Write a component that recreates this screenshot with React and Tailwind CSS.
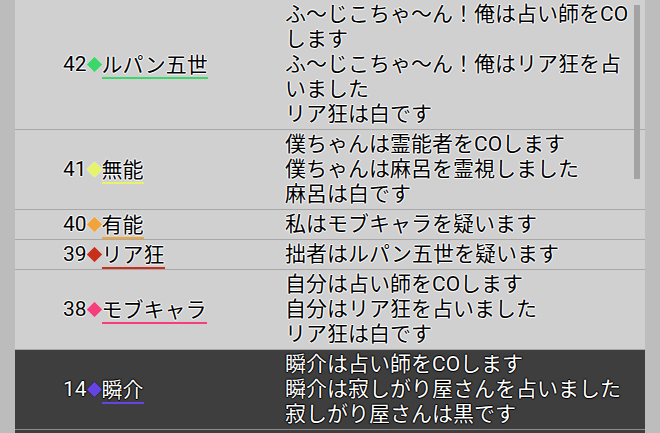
import React from 'react';

const rows = [
  {
    no: 42,
    name: 'ルパン五世',
    color: '#3dd66a',
    lines: ['ふ〜じこちゃ〜ん！俺は占い師をCO', 'します', 'ふ〜じこちゃ〜ん！俺はリア狂を占', 'いました', 'リア狂は白です'],
  },
  {
    no: 41,
    name: '無能',
    color: '#e6f46a',
    lines: ['僕ちゃんは霊能者をCOします', '僕ちゃんは麻呂を霊視しました', '麻呂は白です'],
  },
  { no: 40, name: '有能', color: '#f0a43c', lines: ['私はモブキャラを疑います'] },
  { no: 39, name: 'リア狂', color: '#c8301e', lines: ['拙者はルパン五世を疑います'] },
  {
    no: 38,
    name: 'モブキャラ',
    color: '#f43f7c',
    lines: ['自分は占い師をCOします', '自分はリア狂を占いました', 'リア狂は白です'],
  },
  {
    no: 14,
    name: '瞬介',
    color: '#6445e4',
    dark: true,
    lines: ['瞬介は占い師をCOします', '瞬介は寂しがり屋さんを占いました', '寂しがり屋さんは黒です'],
  },
];

const lightText =
  'text-black [text-shadow:1px_0_0_#fff,-1px_0_0_#fff,0_1px_0_#fff,0_-1px_0_#fff,0_0_2px_#fff]';
const darkText =
  'text-white [text-shadow:1px_0_0_#000,-1px_0_0_#000,0_1px_0_#000,0_-1px_0_#000,0_0_2px_#000]';

const Row = ({ row }) => {
  const txt = row.dark ? darkText : lightText;
  return (
    <div
      className={`flex border-b ${
        row.dark ? 'bg-[#3e3e3e] border-[#8c8c8c]' : 'bg-[#d0d0d0] border-[#a8a8a8]'
      }`}
    >
      <div className={`w-[265px] shrink-0 pl-[48px] flex items-center ${txt}`}>
        <span>{row.no}</span>
        <span
          className="inline-block w-[11px] h-[11px] rotate-45 mx-[2px]"
          style={{ backgroundColor: row.color, boxShadow: row.dark ? '0 0 1px #000' : '0 0 1px #fff' }}
        />
        <span className="relative mt-[2px]">
          {row.name}
          <span className="absolute left-0 right-0 top-[24px] h-[2px]" style={{ backgroundColor: row.color }} />
        </span>
      </div>
      <div className={`flex-1 pl-[5px] pr-[5px] py-[2px] whitespace-nowrap ${txt}`}>
        {row.lines.map((l, i) => (
          <div key={i}>{l}</div>
        ))}
      </div>
    </div>
  );
};

export default function App() {
  return (
    <div
      className="w-[660px] h-[433px] overflow-hidden flex bg-[#bdbdbd] text-[21px] leading-[25px]"
      style={{ fontFamily: 'Roboto, "Noto Sans CJK JP", sans-serif' }}
    >
      <div className="w-[15px] shrink-0 bg-[#bcbcbc]" />
      <div className="relative w-[630px] shrink-0 flex flex-col">
        {rows.map((r) => (
          <Row key={r.no} row={r} />
        ))}
        <div className="h-[40px] bg-[#3e3e3e]" />
        <div className="absolute left-[619px] top-[5px] w-[6px] h-[174px] bg-[#a3a3a3]" />
      </div>
      <div className="flex-1 bg-[#bdbdbd]" />
    </div>
  );
}
